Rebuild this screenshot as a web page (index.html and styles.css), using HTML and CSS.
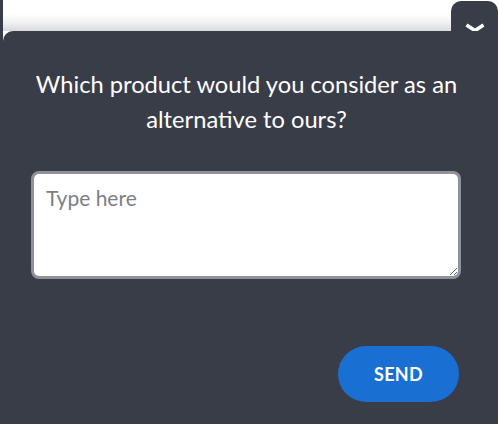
FILE: index.html
```html
<!DOCTYPE html>
<html>
<head>
<meta charset="utf-8">
<link rel="stylesheet" href="styles.css">
</head>
<body>
<div class="page">
  <div class="topbar">
    <div class="edge"></div>
    <div class="backdrop"></div>
    <div class="tab">
      <svg class="chevron" width="20" height="10" viewBox="0 0 20 10"><path d="M1.5 2 L10 7.5 L18.5 2" fill="none" stroke="#fff" stroke-width="3.6" stroke-linecap="butt" stroke-linejoin="miter"/></svg>
    </div>
  </div>
  <div class="panel">
    <h2 class="question">Which product would you consider as an alternative to ours?</h2>
    <textarea class="answer" placeholder="Type here"></textarea>
    <div class="actions">
      <button class="send">SEND</button>
    </div>
  </div>
</div>
</body>
</html>
```
FILE: styles.css
```css
html, body {
  margin: 0;
  padding: 0;
  height: 100%;
}
body {
  background: linear-gradient(to right, #393d47 3px, #ffffff 3px);
  font-family: Lato, "Noto Sans", sans-serif;
  overflow: hidden;
}
.page {
  display: flex;
  flex-direction: column;
  height: 424px;
}
.topbar {
  display: flex;
  height: 31px;
  flex: none;
}
.edge {
  width: 3px;
  background: #393d47;
}
.backdrop {
  flex: 1;
  background: linear-gradient(to bottom, #ffffff 45%, #f3f3f5 70%, #d9dade 100%);
}
.tab {
  width: 47px;
  margin-top: 1px;
  background: #393d47;
  border-radius: 10px 10px 0 0;
  display: flex;
  justify-content: center;
  align-items: flex-start;
  padding-top: 22px;
  box-sizing: border-box;
}
.chevron {
  display: block;
}
.panel {
  flex: 1;
  margin-left: 3px;
  background: #393d47;
  border-top-left-radius: 10px;
  display: flex;
  flex-direction: column;
  padding: 36px 37px 0 29px;
}
.question {
  margin: 0;
  color: #ffffff;
  font-weight: 400;
  font-size: 23.7px;
  line-height: 35px;
  text-align: center;
}
.answer {
  margin-top: 34px;
  margin-left: -1px;
  height: 108px;
  box-sizing: border-box;
  border: 3px solid #8f929a;
  border-radius: 8px;
  background: #ffffff;
  font-family: Lato, "Noto Sans", sans-serif;
  font-size: 21px;
  padding: 11px 10px 11px 12px;
  color: #333;
  outline: none;
  resize: vertical;
}
.answer::placeholder {
  color: #7d7f85;
}
.actions {
  display: flex;
  justify-content: flex-end;
  margin-top: 67px;
  padding-right: 2px;
}
.send {
  width: 121px;
  height: 56px;
  border: none;
  border-radius: 28px;
  background: #1a6fd2;
  color: #ffffff;
  font-family: Lato, "Noto Sans", sans-serif;
  font-weight: 700;
  font-size: 18px;
  letter-spacing: 0.3px;
  cursor: pointer;
}
```
